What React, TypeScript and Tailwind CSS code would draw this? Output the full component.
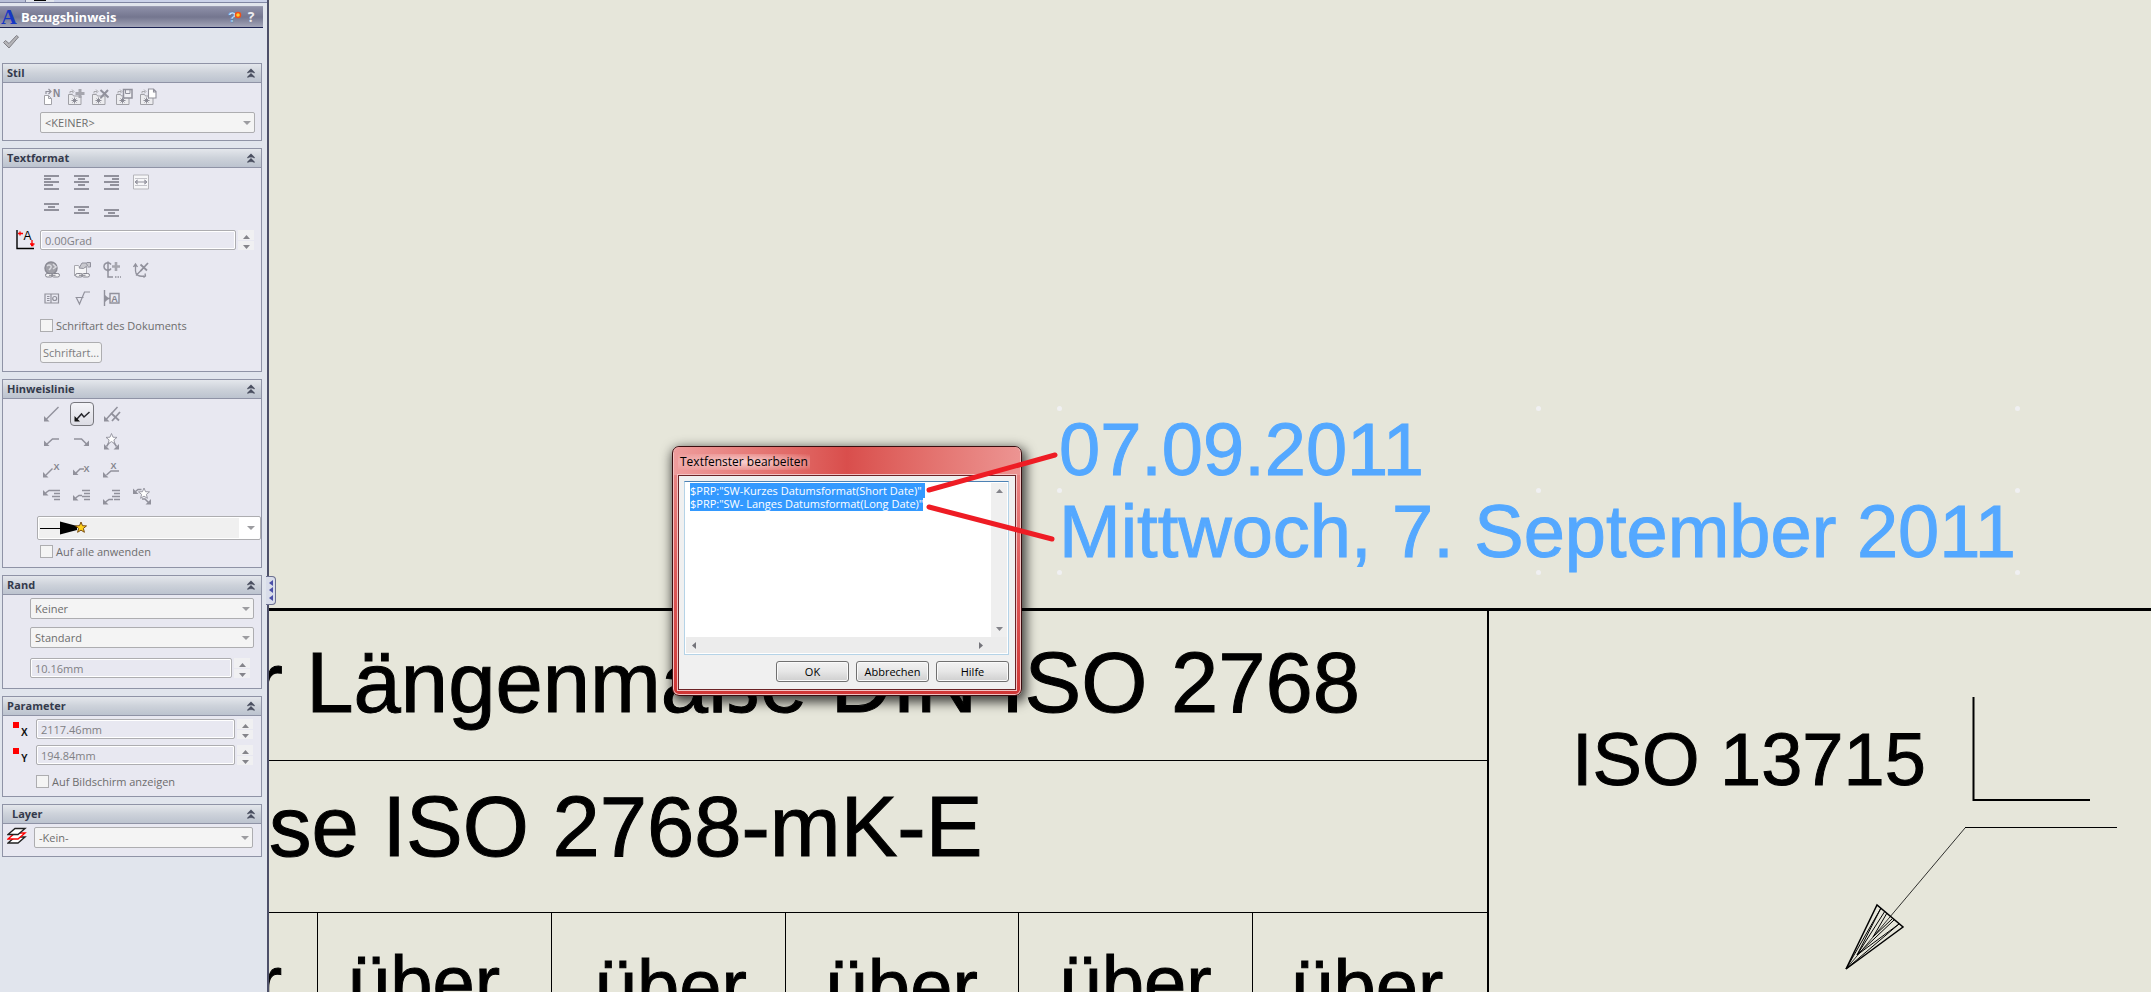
import React, { useEffect, useRef } from 'react';

interface GroupProps {
  title: string;
  indent?: boolean;
  children: React.ReactNode;
}

const Group: React.FC<GroupProps> = ({ title, indent, children }) => (
  <section className="border border-[#8f93a6] bg-[#e8e8f1]">
    <header className={`flex h-[19px] items-center justify-between border-b border-[#8f93a6] bg-linear-to-b from-[#e4e7ec] via-[#cdd2da] via-50% to-[#bcc3cf] pr-1.5 ${indent ? 'pl-[9px]' : 'pl-1'}`}>
      <h2 className="text-[11px] leading-4 font-bold text-[#343a4c]">{title}</h2>
      <button type="button" aria-label={`${title} einklappen`} className="flex h-3 w-2">
        <svg viewBox="0 0 8 12" className="h-3 w-2" fill="none" stroke="#4a4f60" strokeWidth="1.3">
          <path d="M0.5 6 4 2.5 7.5 6M0.5 10.5 4 7 7.5 10.5M2.5 5.5 4 4 5.5 5.5M2.5 10 4 8.5 5.5 10" />
        </svg>
      </button>
    </header>
    {children}
  </section>
);

interface ToolProps {
  label: string;
  active?: boolean;
  children: React.ReactNode;
}

// Flat toolbar button, the glyph is drawn on an 18x18 grid
const Tool: React.FC<ToolProps> = ({ label, active, children }) => (
  <button
    type="button"
    aria-label={label}
    className={`flex h-6 w-6 items-center justify-center ${active ? 'rounded border border-[#77777d] bg-linear-to-b from-[#f4f4f8] to-[#dcdce4]' : ''}`}
  >
    <svg viewBox="0 0 18 18" className="h-[18px] w-[18px] shrink-0" fill="none" stroke="#91919c" strokeWidth="1.5">
      {children}
    </svg>
  </button>
);

interface DropdownProps {
  label: string;
  value: string;
}

const Dropdown: React.FC<DropdownProps> = ({ label, value }) => (
  <div className="relative">
    <select aria-label={label} className="block h-[21px] w-full appearance-none rounded-[2px] border border-[#adadb0] bg-[#f4f4f4] px-1 text-[11px] leading-4 text-[#6d6d6d]">
      <option>{value}</option>
    </select>
    <svg viewBox="0 0 8 4" className="pointer-events-none absolute top-[9px] right-1 h-1 w-2" fill="#9c9ca0">
      <path d="M0 0h8L4 4z" />
    </svg>
  </div>
);

const Spinner: React.FC<DropdownProps> = ({ label, value }) => (
  <div className="flex gap-0.5">
    <input
      type="text"
      aria-label={label}
      defaultValue={value}
      className="h-5 min-w-0 flex-1 rounded-[2px] border border-[#adadb0] bg-[#e8e8f1] px-1 text-[11px] leading-4 text-[#808084] ring-1 ring-white ring-inset"
    />
    <div className="flex w-4 flex-col gap-px">
      <button type="button" aria-label={`${label} erhöhen`} className="flex flex-1 items-end justify-center bg-[#f0f0f2] pb-px">
        <svg viewBox="0 0 7 4" className="h-1 w-[7px]" fill="#84848a"><path d="M0 4h7L3.500 0z" /></svg>
      </button>
      <button type="button" aria-label={`${label} verringern`} className="flex flex-1 items-end justify-center bg-[#f0f0f2] pb-px">
        <svg viewBox="0 0 7 4" className="h-1 w-[7px]" fill="#84848a"><path d="M0 0h7L3.500 4z" /></svg>
      </button>
    </div>
  </div>
);

const Check: React.FC<{ label: string }> = ({ label }) => (
  <label className="flex h-[13px] items-center gap-[3px] text-[11px] leading-[13px] text-[#6d6d6d]">
    <input type="checkbox" className="h-[13px] w-[13px] appearance-none border border-[#adadb0] bg-[#f4f4f4]" />
    {label}
  </label>
);

const Folder = () => (
  <>
    <path d="M1.500 16.500v-10h4l1 1.500h7.500v8.500z" fill="#ececef" stroke="#a0a0a6" strokeWidth="1" />
    <path d="M7.500 9.500v6M4.500 12.500h6M5.500 10.500l4 4M9.500 10.500l-4 4" stroke="#85858f" strokeWidth="0.900" />
    <path d="M3 5.500V3.500h3M5 1.500l2 2-2 2" strokeWidth="1" stroke="#a9a9ae" />
  </>
);

const Chain = () => (
  <g stroke="#85858f" fill="#f2f2f4" strokeWidth="1">
    <rect x="2.500" y="12.500" width="7" height="3.500" rx="1.700" />
    <rect x="9" y="12.500" width="7.500" height="3.500" rx="1.700" />
    <path d="M6 14.300h6.500" />
  </g>
);

const GLYPH_TEXT = 'font-["Liberation_Sans"] font-bold text-[9px]';

const STAR = 'M0-5.500 1.500-1.800 5.500-1.600 2.400 0.900 3.400 4.800 0 2.600-3.400 4.800-2.400 0.900-5.500-1.600-1.500-1.800z';

const StyleTools = () => (
  <div className="flex h-[18px] items-center">
    <Tool label="Standard anwenden">
      <path d="M1.500 16.500v-9h4l3 3v6zM5.500 7.500v3h3" fill="#fff" stroke="#a2a2a8" strokeWidth="1" />
      <path d="M3 6V3.500h4M5.500 1 8 3.500 5.500 6" strokeWidth="1.200" />
      <text x="10" y="8.500" className='font-["Liberation_Sans"] text-[10px] font-bold' fill="#85858f" stroke="none">N</text>
    </Tool>
    <Tool label="Stil hinzufügen"><Folder /><path d="M13 1v9M8.500 5.500h9" strokeWidth="3" stroke="#a6a6ae" /></Tool>
    <Tool label="Stil löschen"><Folder /><path d="m9.500 2 8 7.500M17 2 9.500 10" strokeWidth="2" /></Tool>
    <Tool label="Stil speichern">
      <Folder />
      <path d="M8.500 1.500h8.500v8.500h-8.500z" fill="#f0f0f4" />
      <path d="M10.500 1.500v4h4.500v-4" strokeWidth="1" />
    </Tool>
    <Tool label="Stil laden">
      <Folder />
      <path d="M9.500 1h5l2.500 2.500V10H9.500zM14.500 1v3H17" fill="#fff" strokeWidth="1.100" />
    </Tool>
  </div>
);

const TextTools = () => (
  <>
    <div className="flex h-4 items-center gap-1.5">
      <Tool label="Linksbündig"><path d="M1 3h15M1 6h7M1 9h15M1 12h9M1 16h15" strokeWidth="2" /></Tool>
      <Tool label="Zentriert"><path d="M1 3h15M5 6h7M1 9h15M5 12h7M1 16h15" strokeWidth="2" /></Tool>
      <Tool label="Rechtsbündig"><path d="M1 3h15M9 6h7M1 9h15M7 12h9M1 16h15" strokeWidth="2" /></Tool>
      <Tool label="Text einpassen">
        <path d="M0.500 2h15v14h-15z" fill="#f6f6f8" stroke="#b5b5ba" strokeWidth="1" />
        <path d="M2 5.500h12M2 12.500h12" stroke="#c4c4ca" strokeWidth="1" />
        <path d="M2 9h12M4 7v4M12 7v4M2 9l2.500-2M2 9l2.500 2M14 9l-2.500-2M14 9l-2.500 2" strokeWidth="1" />
      </Tool>
    </div>
    <div className="mt-3 flex h-4 items-center gap-1.5">
      <Tool label="Oben"><path d="M1 3h15M5 6h7M1 9h15" strokeWidth="2" /></Tool>
      <Tool label="Mitte"><path d="M1 6h15M5 9h7M1 12h15" strokeWidth="2" /></Tool>
      <Tool label="Unten"><path d="M1 9h15M5 12h7M1 15h15" strokeWidth="2" /></Tool>
    </div>
  </>
);

const InsertTools = () => (
  <>
    <div className="flex h-[18px] items-center gap-1.5">
      <Tool label="Hyperlink">
        <circle cx="8" cy="7" r="6" fill="#a0a0a8" stroke="#8b8b95" />
        <path d="M4 5c2-2 3-1 4 0s-1 3-2 4M10 3l3 3-3 2" stroke="#d8d8de" />
        <Chain />
      </Tool>
      <Tool label="Mit Eigenschaft verknüpfen">
        <path d="M1.500 15V4.500h4l1 1.500h7V14" fill="#f5f5f7" stroke="#a9a9b0" strokeWidth="1" />
        <path d="m6 7 3-5h4l1.500 2.500-4 3zM13.500 1.500h4V6h-3" fill="#c9c9cf" strokeWidth="1" />
        <Chain />
      </Tool>
      <Tool label="Symbol hinzufügen">
        <path d="M8 3.500a3.800 3.800 0 1 0 0 4M5 0.500v10" />
        <path d="M13 1v9M9 5.500h8" strokeWidth="2.600" stroke="#a6a6ae" />
        <path d="M5 10v6h5M12 16h1.500M14.500 16H16M17 16h1" />
      </Tool>
      <Tool label="Notiz sperren">
        <path d="M2.500 3v7c0 4 3.500 6 9 5M3 14.500 9.500 8M0.500 6l2-3 2 3M12 12.500l0.500 2.500-2 1.500" strokeWidth="1.300" />
        <path d="m7.500 3.500 6.500 6M15 2 7.500 10" strokeWidth="1.800" />
      </Tool>
    </div>
    <div className="mt-2.5 flex h-[18px] items-center gap-1.5">
      <Tool label="Geometrische Toleranz">
        <path d="M2 5h13.500v9H2zM8 5v9M4 7.500h2.500M4 9.500h2.500M4 11.500h2.500" strokeWidth="1.200" />
        <circle cx="11.700" cy="9.500" r="2" strokeWidth="1.200" />
      </Tool>
      <Tool label="Oberflächenzeichen"><path d="M2.500 8.500h8M3.500 9l3 6 5-12h5.500" strokeWidth="1.200" /></Tool>
      <Tool label="Bezugssymbol">
        <path d="M1.500 1v16M2 9.500h5M7 4.500h9v9.500H7z" strokeWidth="1.400" />
        <path d="M2 6v7l4-3.500z" fill="#91919c" stroke="none" />
        <text x="8.300" y="12.500" className={GLYPH_TEXT} fill="#85858f" stroke="none">A</text>
      </Tool>
    </div>
  </>
);

const LeaderTools = () => (
  <>
    <div className="flex h-6 items-center gap-1.5">
      <Tool label="Hinweislinie"><path d="M15.500 2 3 14.500" /><path d="M1 11v5.500h5.500z" fill="#91919c" stroke="none" /></Tool>
      <Tool label="Mehrfachknick" active>
        <path d="m4 14 4.500-5 2.500 3L16.500 7" stroke="#26262c" />
        <path d="M1.500 11v5.500H7z" fill="#111" stroke="none" />
      </Tool>
      <Tool label="Keine Hinweislinie">
        <path d="M14.500 2 3 14.500" /><path d="M1 11v5.500h5.500z" fill="#91919c" stroke="none" />
        <path d="m8 8 8 7.500M17 7l-8 9" strokeWidth="1.800" />
      </Tool>
    </div>
    <div className="mt-1 flex h-6 items-center gap-1.5">
      <Tool label="Links"><path d="M16 6H9.500L4 11" /><path d="M1 7.500V13h5.500z" fill="#91919c" stroke="none" /></Tool>
      <Tool label="Rechts"><path d="M1 6h7.500l5 5" /><path d="M16 7.500V13h-5.500z" fill="#91919c" stroke="none" /></Tool>
      <Tool label="Nächste">
        <path d="M6.500 9 3.500 13.500M10.500 9l3 4.500" /><path d="M1 11v5.500h5.500zM16 11v5.500h-5.500z" fill="#91919c" stroke="none" />
        <path d={STAR} transform="translate(8.500 6)" fill="#fff" strokeWidth="0.900" />
      </Tool>
    </div>
    <div className="mt-1 flex h-6 items-center gap-1.5">
      <Tool label="Gerade"><path d="m3 14 6.500-6.500" /><path d="M0 11v5.500h5.500z" fill="#91919c" stroke="none" /><text x="10.500" y="9" className={GLYPH_TEXT} fill="#85858f" stroke="none">X</text></Tool>
      <Tool label="Geknickt"><path d="M11 8H7l-4 4" /><path d="M0 8.500V14h5.500z" fill="#91919c" stroke="none" /><text x="10.500" y="11" className={GLYPH_TEXT} fill="#85858f" stroke="none">X</text></Tool>
      <Tool label="Unterstrichen"><path d="M16 10H8l-4.500 4" /><path d="M0 11v5.500h5.500z" fill="#91919c" stroke="none" /><text x="7.500" y="8" className={GLYPH_TEXT} fill="#85858f" stroke="none">X</text></Tool>
    </div>
    <div className="mt-0.5 flex h-6 items-center gap-1.5">
      <Tool label="Oben anbringen"><path d="M9 3.500H6L2.500 6M9 3.500h8M11 6.500h6M9 9.500h8M11 12.500h6" /><path d="M0 3v5.500h5.500z" fill="#91919c" stroke="none" /></Tool>
      <Tool label="Mitte anbringen"><path d="M9 8.500H6L2.500 11M9 3.500h8M11 6.500h6M9 9.500h8M11 12.500h6" /><path d="M0 8v5.500h5.500z" fill="#91919c" stroke="none" /></Tool>
      <Tool label="Unten anbringen"><path d="M10 12.500H6L2.500 15M9 3.500h8M11 6.500h6M9 9.500h8M11 12.500h6" /><path d="M0 12v5.500h5.500z" fill="#91919c" stroke="none" /></Tool>
      <Tool label="Nächste Seite">
        <path d="M8.500 2.500H5L2.500 4.500M9 12h3l3.500 3.500" /><path d="M0 1.500V7h5.500zM18 12v5.500h-5.500z" fill="#91919c" stroke="none" />
        <path d={STAR} transform="translate(11 6.500)" fill="#fff" strokeWidth="0.900" />
      </Tool>
    </div>
  </>
);

const AxisIcon: React.FC<{ axis: string }> = ({ axis }) => (
  <svg viewBox="0 0 16 16" className="h-4 w-4 shrink-0">
    <path d="M0 1h6v6H0z" fill="#f00" />
    <text x="8" y="15" className='font-["Liberation_Sans"] text-[10px] font-bold' fill="#111">{axis}</text>
  </svg>
);

const PropertyManager = () => (
  <aside className='relative z-10 w-[269px] shrink-0 border-r-2 border-[#4d5069] bg-[#e1e5ed] font-["Open_Sans",sans-serif]'>
    <div className="flex h-[3px] border-b border-[#8086a3] bg-[#ccd3ea]">
      <div className="w-[26px] border-r border-[#8086a3] bg-[#b9c0d8]" />
      <div className="flex w-7 justify-center bg-[#e1e5ed]"><div className="h-px w-3 bg-black" /></div>
    </div>

    <div className="mt-[3px] mr-1 flex h-[22px] items-center border-t border-b border-t-[#9a9cb2] border-b-[#1b2252] bg-linear-to-b from-[#8e90a8] via-[#74768f] via-50% to-[#a3a5b8] pr-1">
      <svg viewBox="0 0 18 18" className="h-[18px] w-[18px] shrink-0">
        <text x="1" y="16" className='font-["Liberation_Serif"] text-[22px] font-bold' fill="#1637c4">A</text>
      </svg>
      <h1 className="ml-[3px] flex-1 text-[13px] leading-4 font-bold text-white">Bezugshinweis</h1>
      <button type="button" aria-label="Neue Funktionen" className="flex h-4 w-4">
        <svg viewBox="0 0 16 16" className="h-4 w-4">
          <text x="1" y="13" className='font-["Liberation_Sans"] text-[14px] font-bold' fill="#d5ecff" stroke="#3a7fc0" strokeWidth="0.400">?</text>
          <circle cx="11" cy="6" r="2.500" fill="#ffcf30" stroke="#f0501a" strokeWidth="1.500" />
        </svg>
      </button>
      <button type="button" aria-label="Hilfe" className="w-4 text-[14px] leading-4 font-bold text-[#ececf0]">?</button>
    </div>

    <button type="button" aria-label="OK" className="mt-[5px] ml-[3px] flex h-[18px] w-[18px]">
      <svg viewBox="0 0 18 18" className="h-[18px] w-[18px]"><path d="m0.500 9.500 2-2 3.500 3L13.500 2.500l2 1.500L6 15z" fill="#b4b4b8" stroke="#808086" /></svg>
    </button>

    <div className="mt-2.5 mr-[5px] ml-0.5 flex flex-col gap-[7px] pt-0.5">
      <Group title="Stil">
        <div className="pt-[5px] pr-1.5 pb-[7px] pl-[37px]">
          <StyleTools />
          <div className="mt-1.5"><Dropdown label="Stil" value="<KEINER>" /></div>
        </div>
      </Group>

      <Group title="Textformat">
        <div className="pt-1.5 pr-[7px] pb-2 pl-[37px]">
          <TextTools />
          <div className="mt-3 -ml-[25px] flex gap-[5px]">
            <svg viewBox="0 0 20 20" className="h-5 w-5 shrink-0" fill="none">
              <path d="M2 0v18.500h17" stroke="#000" strokeWidth="1.400" />
              <path d="M3 3.500h5M5 1.500v4M17 10v6M15 14h4.500M16 15.500h2.500" stroke="#f00" strokeWidth="1.300" />
              <text x="8.500" y="9.500" className='font-["Liberation_Sans"] text-[12px]' fill="#000">A</text>
            </svg>
            <div className="flex-1"><Spinner label="Winkel" value="0.00Grad" /></div>
          </div>
          <div className="mt-[11px]"><InsertTools /></div>
          <div className="mt-3"><Check label="Schriftart des Dokuments" /></div>
          <button type="button" className="mt-2.5 h-[21px] w-[62px] rounded-[3px] border border-[#adadb0] bg-[#f4f4f4] text-[11px] leading-4 text-[#7d7d80]">Schriftart...</button>
        </div>
      </Group>

      <Group title="Hinweislinie">
        <div className="pt-[3px] pb-[9px] pl-[37px]">
          <LeaderTools />
          <div className="mt-2 -ml-[3px] flex h-6 items-center rounded-[2px] border border-[#adadb0] bg-white p-px">
            <button type="button" aria-label="Pfeilspitze" className="flex h-full flex-1 items-center bg-[#f0f0f0]">
              <svg viewBox="0 0 50 16" className="h-4 w-[50px]">
                <path d="M1 8.500h20" stroke="#000" strokeWidth="1" />
                <path d="M21 1.500v13L38 10V6z" fill="#000" />
                <path d={STAR} transform="translate(42 7.500)" fill="#ffd21c" stroke="#7a4c10" />
              </svg>
            </button>
            <svg viewBox="0 0 8 4" className="mx-1 ml-2 h-1 w-2" fill="#9c9ca0"><path d="M0 0h8L4 4z" /></svg>
          </div>
          <div className="mt-[5px]"><Check label="Auf alle anwenden" /></div>
        </div>
      </Group>

      <Group title="Rand">
        <div className="pt-[3px] pr-[7px] pb-2.5 pl-[27px]">
          <Dropdown label="Randform" value="Keiner" />
          <div className="mt-2"><Dropdown label="Randgröße" value="Standard" /></div>
          <div className="mt-2.5 pr-1"><Spinner label="Randabstand" value="10.16mm" /></div>
        </div>
      </Group>

      <Group title="Parameter">
        <div className="pt-[3px] pr-2 pb-2 pl-2.5">
          <div className="flex items-center gap-[7px]"><AxisIcon axis="X" /><div className="flex-1"><Spinner label="X" value="2117.46mm" /></div></div>
          <div className="mt-1.5 flex items-center gap-[7px]"><AxisIcon axis="Y" /><div className="flex-1"><Spinner label="Y" value="194.84mm" /></div></div>
          <div className="mt-2.5 ml-[23px]"><Check label="Auf Bildschirm anzeigen" /></div>
        </div>
      </Group>

      <Group title="Layer" indent>
        <div className="flex gap-[7px] pt-[3px] pr-2 pb-2 pl-1">
          <svg viewBox="0 0 20 18" className="h-[18px] w-5 shrink-0" fill="#fff" strokeWidth="1.400">
            <path d="M1 16h10l7-6H8z" stroke="#222" />
            <path d="M1 12h10l7-6H8z" stroke="#f00" />
            <path d="M1 7.500h10L18 1.500H8z" stroke="#222" />
          </svg>
          <div className="flex-1"><Dropdown label="Layer" value="-Kein-" /></div>
        </div>
      </Group>
    </div>

    <button type="button" aria-label="Leiste ausblenden" className="absolute top-[576px] -right-[9px] flex h-[29px] w-[10px] flex-col items-end justify-around rounded-r border border-l-0 border-[#6c7090] bg-[#d9ddea] py-0.5 pr-0.5">
      <svg viewBox="0 0 4 6" className="h-1.5 w-1" fill="#4b4fa8"><path d="M4 0v6L0 3z" /></svg>
      <svg viewBox="0 0 4 6" className="h-1.5 w-1" fill="#4b4fa8"><path d="M4 0v6L0 3z" /></svg>
      <svg viewBox="0 0 4 6" className="h-1.5 w-1" fill="#4b4fa8"><path d="M4 0v6L0 3z" /></svg>
    </button>
  </aside>
);

const DateNote = () => (
  <div className="absolute top-[406px] left-[788px] h-[169px] w-[963px]">
    <p className="pt-[3px] pl-0.5 text-[74px] leading-[82px] whitespace-nowrap text-[#54a8ff] [-webkit-text-stroke:1px]">
      07.09.2011
      <br />
      Mittwoch, 7. September 2011
    </p>
    {/* Selection grips */}
    <div className="absolute inset-0 grid grid-cols-3 content-between">
      {[0, 1, 2, 3, 4, 5, 6, 7, 8].map((i) => (
        <span key={i} className={`h-[5px] w-[5px] rounded-full bg-[#f0f0f2] ${i % 3 === 0 ? 'justify-self-start' : i % 3 === 1 ? 'justify-self-center' : 'justify-self-end'}`} />
      ))}
    </div>
  </div>
);

const TitleBlock = () => (
  <div className="grid flex-1 grid-cols-[1220fr_662fr] border-t-3 border-black [-webkit-text-stroke:1px]">
    <div className="flex min-w-0 flex-col border-r-2 border-black">
      <div className="flex h-[150px] justify-end overflow-hidden border-b border-black pt-[29px] pr-[127px] text-[85px] leading-[86px] whitespace-nowrap">
        r Längenmaße DIN ISO 2768
      </div>
      <div className="h-[152px] overflow-hidden border-b border-black pt-[23px] text-[85px] leading-[86px] whitespace-nowrap">
        se ISO 2768-mK-E
      </div>
      <div className="grid flex-1 grid-cols-[49px_repeat(5,1fr)] overflow-hidden text-[76px] leading-[76px]">
        <div className="flex justify-end border-r border-black pt-8 pr-[35px]">r</div>
        <div className="border-r border-black pt-8 pl-[30px]">über</div>
        <div className="border-r border-black pt-9 pl-[43px]">über</div>
        <div className="border-r border-black pt-9 pl-10">über</div>
        <div className="border-r border-black pt-8 pl-10">über</div>
        <div className="pt-9 pl-[38px]">über</div>
      </div>
    </div>
    <div className="relative pt-[111px] pl-[83px] text-[74px] leading-[75px] whitespace-nowrap">
      <span className="[font-kerning:none]">ISO 13715</span>
      <svg viewBox="0 0 662 381" className="absolute top-0 left-0 h-[381px] w-[662px]" fill="none" stroke="#000">
        <path d="M484.500 86v104" strokeWidth="2" />
        <path d="M484 189h117" strokeWidth="2" />
        <path d="M476 216.500h152" />
        <path d="M476 217 357 358" strokeWidth="0.800" />
        <path d="m357 358 31-64 26 22z" strokeWidth="1.500" />
        <path d="m357 358 35-61M357 358l53-45M368 344l28-44M368 344l37-35M384 326l14-24M384 326l19-18M368 344l24-47M368 344l42-31" />
      </svg>
    </div>
  </div>
);

const EditDialog = () => {
  const field = useRef<HTMLTextAreaElement>(null);

  useEffect(() => {
    field.current?.focus();
    field.current?.select();
  }, []);

  return (
    <div
      role="dialog"
      aria-label="Textfenster bearbeiten"
      className='absolute top-[446px] left-[403px] flex h-[250px] w-[350px] flex-col rounded-[7px] border border-[#3a0e10] bg-linear-to-b from-[#e98f8f] via-[#dd5a5a] via-50% to-[#cf3636] px-[5px] pb-[5px] font-["Open_Sans",sans-serif] text-[11px] text-black shadow-[2px_4px_12px_2px_rgba(0,0,0,0.75)] ring-1 ring-[#f3c3c3] ring-inset'
    >
      <div className="-mx-1 flex h-7 items-center rounded-t-md bg-linear-to-r from-[#ee9c9c] via-[#d94e4c] to-[#ec9492] px-1 pt-px">
        <h2 className="bg-radial from-[#f8d0d0] to-transparent px-0.5 text-[12px] leading-4">Textfenster bearbeiten</h2>
      </div>
      <div className="flex flex-1 flex-col border border-[#6b2326] bg-[#f0f0f0] p-[5px] pr-1.5 outline outline-[#f3c3c3]">
        <div className="flex h-[174px] flex-col border border-[#b5d3e7] border-t-[#4d82b4] bg-white p-px">
          <div className="flex flex-1">
            <textarea
              ref={field}
              aria-label="Text"
              className="flex-1 resize-none overflow-hidden pt-px pl-1 text-[11px] leading-[13px] whitespace-pre outline-none selection:bg-[#3399ff] selection:text-white"
              defaultValue={'$PRP:"SW-Kurzes Datumsformat(Short Date)"\n$PRP:"SW- Langes Datumsformat(Long Date)"'}
            />
            <div className="flex w-4 flex-col items-center justify-between bg-[#efefef] py-1.5">
              <svg viewBox="0 0 7 4" className="h-1 w-[7px]" fill="#84848a"><path d="M0 4h7L3.500 0z" /></svg>
              <svg viewBox="0 0 7 4" className="h-1 w-[7px]" fill="#84848a"><path d="M0 0h7L3.500 4z" /></svg>
            </div>
          </div>
          <div className="flex h-4 items-center justify-between bg-[#ececec] pr-6 pl-1.5">
            <svg viewBox="0 0 4 7" className="h-[7px] w-1" fill="#74747a"><path d="M4 0v7L0 3.500z" /></svg>
            <svg viewBox="0 0 4 7" className="h-[7px] w-1" fill="#74747a"><path d="M0 0v7l4-3.500z" /></svg>
          </div>
        </div>
        <div className="mt-1.5 flex justify-end gap-[7px]">
          {['OK', 'Abbrechen', 'Hilfe'].map((label) => (
            <button
              key={label}
              type="button"
              className="h-[21px] w-[73px] rounded-[3px] border border-[#707070] bg-linear-to-b from-[#f2f2f2] via-[#e6e6e6] to-[#cfcfcf] text-[11px] leading-4 ring-1 ring-[#fafafa] ring-inset"
            >
              {label}
            </button>
          ))}
        </div>
      </div>
    </div>
  );
};

export default function App() {
  return (
    <div className='flex h-screen w-full overflow-hidden bg-[#e6e6da] font-["Liberation_Sans",Arial,sans-serif] text-black'>
      <PropertyManager />
      <main className="relative flex min-w-0 flex-1 flex-col overflow-hidden">
        <div className="h-[608px] shrink-0">
          <DateNote />
        </div>
        <TitleBlock />
        <EditDialog />
        {/* Red pointers from the expressions to the resulting dates */}
        <svg viewBox="0 0 140 100" className="pointer-events-none absolute top-[446px] left-[654px] h-[100px] w-[140px]" stroke="#ee1c24" strokeWidth="5" strokeLinecap="round">
          <path d="M6 44 132 9M6 61l123 32" />
        </svg>
      </main>
    </div>
  );
}
